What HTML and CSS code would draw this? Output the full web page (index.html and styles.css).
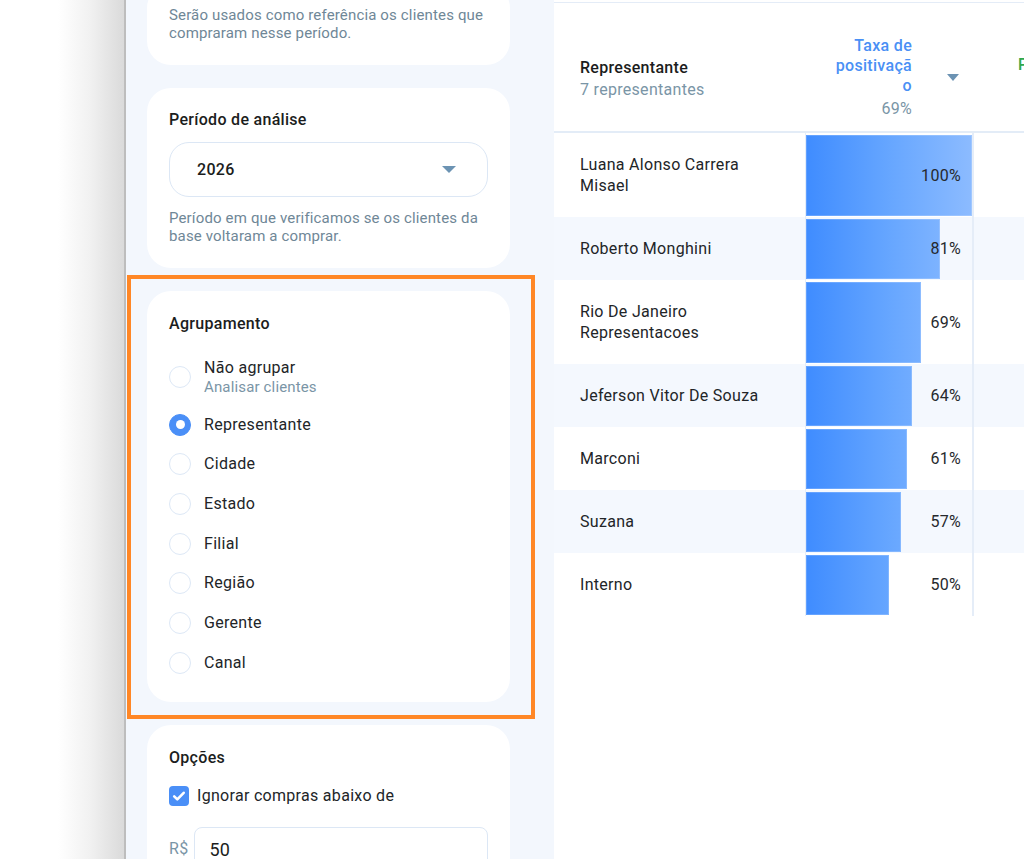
FILE: index.html
```html
<!DOCTYPE html>
<html lang="pt-BR">
<head>
<meta charset="utf-8">
<title>Positivação</title>
<link rel="stylesheet" href="styles.css">
</head>
<body>
<div class="app">
  <div class="backdrop"></div>
  <aside class="sidebar">
    <section class="card card-first">
      <p class="help help-first">Serão usados como referência os clientes que compraram nesse período.</p>
    </section>
    <section class="card">
      <h3 class="card-title">Período de análise</h3>
      <div class="select"><span>2026</span><i class="caret"></i></div>
      <p class="help">Período em que verificamos se os clientes da base voltaram a comprar.</p>
    </section>
    <section class="card card-group">
      <h3 class="card-title title-group">Agrupamento</h3>
      <ul class="radios">
        <li class="radio-item"><span class="radio"></span><span class="radio-text">Não agrupar<small>Analisar clientes</small></span></li>
        <li class="radio-item"><span class="radio checked"></span><span class="radio-text">Representante</span></li>
        <li class="radio-item"><span class="radio"></span><span class="radio-text">Cidade</span></li>
        <li class="radio-item"><span class="radio"></span><span class="radio-text">Estado</span></li>
        <li class="radio-item"><span class="radio"></span><span class="radio-text">Filial</span></li>
        <li class="radio-item"><span class="radio"></span><span class="radio-text">Região</span></li>
        <li class="radio-item"><span class="radio"></span><span class="radio-text">Gerente</span></li>
        <li class="radio-item"><span class="radio"></span><span class="radio-text">Canal</span></li>
      </ul>
    </section>
    <section class="card card-options">
      <h3 class="card-title title-options">Opções</h3>
      <label class="check-row"><span class="checkbox"><svg viewBox="0 0 20 20" width="20" height="20"><path d="M5.2 10.4l3.1 3 6.4-6.6" fill="none" stroke="#fff" stroke-width="2.6" stroke-linecap="round" stroke-linejoin="round"/></svg></span>Ignorar compras abaixo de</label>
      <div class="money-row"><span class="currency">R$</span><div class="input">50</div></div>
    </section>
    <div class="highlight"></div>
  </aside>
  <main class="main">
    <div class="table">
      <div class="row head">
        <div class="cell name-head"><strong>Representante</strong><span class="muted">7 representantes</span></div>
        <div class="cell rate-head">
          <div class="rate-title"><strong>Taxa de positivação</strong><span class="muted">69%</span></div>
          <i class="caret sort"></i>
        </div>
        <div class="cell pos-head"><strong>P</strong></div>
      </div>
      <div class="row">
        <div class="cell name">Luana Alonso Carrera Misael</div>
        <div class="cell bar-cell"><div class="bar" style="width:100%"></div><span class="pct">100%</span></div>
        <div class="cell"></div>
      </div>
      <div class="row alt">
        <div class="cell name">Roberto Monghini</div>
        <div class="cell bar-cell"><div class="bar" style="width:81%"></div><span class="pct">81%</span></div>
        <div class="cell"></div>
      </div>
      <div class="row">
        <div class="cell name">Rio De Janeiro Representacoes</div>
        <div class="cell bar-cell"><div class="bar" style="width:69%"></div><span class="pct">69%</span></div>
        <div class="cell"></div>
      </div>
      <div class="row alt">
        <div class="cell name">Jeferson Vitor De Souza</div>
        <div class="cell bar-cell"><div class="bar" style="width:64%"></div><span class="pct">64%</span></div>
        <div class="cell"></div>
      </div>
      <div class="row">
        <div class="cell name">Marconi</div>
        <div class="cell bar-cell"><div class="bar" style="width:61%"></div><span class="pct">61%</span></div>
        <div class="cell"></div>
      </div>
      <div class="row alt">
        <div class="cell name">Suzana</div>
        <div class="cell bar-cell"><div class="bar" style="width:57%"></div><span class="pct">57%</span></div>
        <div class="cell"></div>
      </div>
      <div class="row">
        <div class="cell name">Interno</div>
        <div class="cell bar-cell"><div class="bar" style="width:50%"></div><span class="pct">50%</span></div>
        <div class="cell"></div>
      </div>
    </div>
  </main>
</div>
</body>
</html>
```
FILE: styles.css
```css
* { box-sizing: border-box; }
html, body { margin: 0; padding: 0; }
body {
  width: 1024px;
  height: 859px;
  overflow: hidden;
  font-family: Roboto, "Liberation Sans", Arial, sans-serif;
  font-size: 16px;
  letter-spacing: 0.3px;
  color: #1f2226;
  background: #fff;
}
.app {
  display: flex;
  height: 859px;
  overflow: hidden;
}
.backdrop {
  flex: 0 0 126px;
  background: linear-gradient(90deg, #ffffff 0, #ffffff 58px, #f1f1f1 90px, #dadada 124px);
  border-right: 2px solid #bdbdbd;
}
.sidebar {
  flex: 0 0 428px;
  position: relative;
  background: #f3f7fd;
  padding: 0 44px 0 21px;
  display: flex;
  flex-direction: column;
  gap: 23px;
}
.card {
  background: #fff;
  border-radius: 24px;
  padding: 22px 22px 23px;
}
.card-first {
  margin-top: -16px;
  padding-top: 22px;
}
.card-title {
  margin: 0 0 12px;
  font-size: 16px;
  line-height: 20px;
  font-weight: 500;
  color: #1b1d20;
}
.select {
  height: 55px;
  border: 1.5px solid #dce7f5;
  border-radius: 20px;
  display: flex;
  align-items: center;
  justify-content: space-between;
  padding: 0 31px 0 27px;
  font-weight: 500;
  color: #1b1d20;
}
.caret {
  display: block;
  width: 0;
  height: 0;
  border-left: 7px solid transparent;
  border-right: 7px solid transparent;
  border-top: 7px solid #6c93b3;
}
.help {
  margin: 12px 0 0;
  font-size: 15px;
  line-height: 18px;
  letter-spacing: 0.15px;
  color: #6f8797;
}
.help-first { margin-top: 0; }
.card-group { padding-top: 23px; padding-bottom: 28px; }
.title-group { margin-bottom: 24px; }
.radios {
  list-style: none;
  margin: 0;
  padding: 0;
  display: flex;
  flex-direction: column;
  gap: 17.67px;
}
.radio-item {
  display: flex;
  align-items: center;
  gap: 13px;
  min-height: 22px;
}
.radio {
  flex: 0 0 22px;
  width: 22px;
  height: 22px;
  border-radius: 50%;
  border: 1.5px solid #dde8f6;
  background: #fff;
  display: flex;
  align-items: center;
  justify-content: center;
}
.radio.checked {
  background: #4a8ff7;
  border-color: #4a8ff7;
}
.radio.checked::after {
  content: "";
  width: 9px;
  height: 9px;
  border-radius: 50%;
  background: #fff;
}
.radio-text {
  display: flex;
  flex-direction: column;
  line-height: 20px;
  color: #222528;
}
.radio-text small {
  font-size: 15px;
  line-height: 18px;
  letter-spacing: 0.15px;
  color: #7a95a6;
}
.card-options { padding-top: 23px; }
.title-options { margin-bottom: 18px; }
.check-row {
  display: flex;
  align-items: center;
  gap: 8px;
  line-height: 20px;
  color: #222528;
}
.checkbox {
  width: 20px;
  height: 20px;
  border-radius: 4px;
  background: #4a8ff7;
  display: flex;
}
.money-row {
  margin-top: 21px;
  display: flex;
  align-items: flex-start;
  gap: 6px;
}
.currency {
  color: #7a95a6;
  line-height: 22px;
  margin-top: 11px;
}
.input {
  flex: 1;
  height: 48px;
  border: 1.5px solid #dce7f5;
  border-radius: 8px;
  padding: 0 14px;
  font-size: 18px;
  line-height: 44px;
  color: #1b1d20;
}
.highlight {
  position: absolute;
  left: 1px;
  top: 275px;
  width: 408px;
  height: 444px;
  border: 4px solid #ff8726;
  pointer-events: none;
}
.main {
  flex: 1;
  min-width: 0;
  background: #fff;
  overflow: hidden;
  padding-top: 2px;
}
.table {
  width: 900px;
  border-top: 1.5px solid #e4ecf7;
}
.row {
  display: grid;
  grid-template-columns: 251px 169px 220px 260px;
  background: #fff;
}
.row.alt { background: #f4f8fe; }
.row.head {
  height: 129.5px;
  padding-top: 22px;
  align-items: center;
  border-bottom: 2px solid #e3ecf7;
}
.cell { min-width: 0; }
.name-head {
  display: flex;
  flex-direction: column;
  padding: 2px 0 0 26px;
  line-height: 22px;
}
.name-head strong { font-weight: 500; color: #1b1d20; }
.muted { color: #7a95a6; }
.pos-head {
  align-self: start;
  margin-top: 29px;
  padding-left: 44px;
  line-height: 22px;
}
.pos-head strong { font-weight: 500; color: #2ea84e; }
.rate-head {
  display: flex;
  align-items: center;
  justify-content: flex-end;
  padding-right: 15px;
}
.rate-title {
  width: 82px;
  text-align: right;
  line-height: 20px;
  display: flex;
  flex-direction: column;
  overflow-wrap: anywhere;
}
.rate-title strong { font-weight: 500; color: #4a90f5; }
.rate-title .muted { line-height: 23px; padding-top: 1px; }
.sort { margin-left: 35px; border-left-width: 6px; border-right-width: 6px; }
.name {
  padding: 21px 40px 21px 26px;
  line-height: 21px;
  color: #222528;
}
.bar-cell {
  display: grid;
  padding: 2px 0 1px;
  border-left: 1px solid #e5edf8;
  border-right: 2px solid #e5edf8;
}
.bar, .pct { grid-area: 1 / 1; }
.bar {
  justify-self: start;
  background: linear-gradient(90deg, #3f8cff 0, #66a6ff 50%, #8cbbff 100%);
  background-size: 166px 100%;
  background-repeat: no-repeat;
  box-shadow: inset 0 0 0 1px rgba(255, 255, 255, 0.18);
}
.pct {
  justify-self: end;
  align-self: center;
  padding-right: 11px;
  color: #26292d;
  position: relative;
}
```
